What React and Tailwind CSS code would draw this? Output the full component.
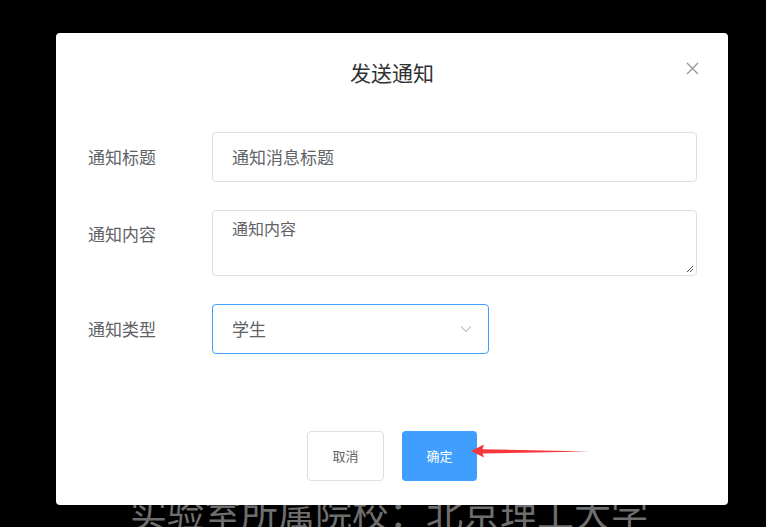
import React from 'react';

const font = { fontFamily: '"Noto Sans CJK SC", "Noto Sans", sans-serif' };

function Row({ label, children, top = false }) {
  return (
    <div className={`flex ${top ? 'items-start' : 'items-center'}`}>
      <div className={`w-[124px] shrink-0 text-[17px] text-[#606266] ${top ? 'pt-[11px]' : ''}`}>{label}</div>
      {children}
    </div>
  );
}

export default function App() {
  return (
    <div className="relative w-[766px] h-[527px] bg-black overflow-hidden" style={font}>
      <div className="absolute left-[130px] top-[494px] text-[37px] leading-none text-[#6e6e6e] whitespace-nowrap">
        实验室所属院校：北京理工大学
      </div>

      <div className="absolute left-[56px] top-[33px] w-[672px] h-[472px] bg-white rounded-[4px] flex flex-col">
        <div className="relative h-[80px] flex items-center justify-center">
          <span className="text-[21px] text-[#303133]">发送通知</span>
          <svg className="absolute right-[29px] top-[29px]" width="13" height="13" viewBox="0 0 13 13">
            <path d="M1 1L12 12M12 1L1 12" stroke="#909399" strokeWidth="1.2" fill="none" />
          </svg>
        </div>

        <div className="flex flex-col gap-[28px] pl-[32px] pr-[31px] pt-[19px]">
          <Row label="通知标题">
            <div className="flex-1 h-[50px] border border-[#dcdfe6] rounded-[4px] flex items-center px-[19px] text-[17px] text-[#606266]">
              通知消息标题
            </div>
          </Row>
          <Row label="通知内容" top>
            <div className="relative flex-1 h-[66px] border border-[#dcdfe6] rounded-[4px] px-[19px] pt-[5px] text-[16px] text-[#606266]">
              通知内容
              <svg className="absolute right-[2px] bottom-[2px]" width="8" height="8" viewBox="0 0 8 8">
                <path d="M7 1L1 7M7 4L4 7" stroke="#555" strokeWidth="1" fill="none" />
              </svg>
            </div>
          </Row>
          <Row label="通知类型">
            <div className="w-[277px] h-[50px] border border-[#409eff] rounded-[4px] flex items-center justify-between pl-[19px] pr-[16px] text-[17px] text-[#606266]">
              <span>学生</span>
              <svg width="12" height="8" viewBox="0 0 12 8">
                <path d="M1 1.5L6 6.5L11 1.5" stroke="#c0c4cc" strokeWidth="1.2" fill="none" />
              </svg>
            </div>
          </Row>
        </div>

        <div className="mt-auto mb-[24px] flex justify-center gap-[18px]">
          <button className="w-[77px] h-[50px] border border-[#dcdfe6] rounded-[4px] bg-white text-[13px] text-[#606266]">
            取消
          </button>
          <div className="relative">
            <button className="w-[75px] h-[50px] rounded-[4px] bg-[#409eff] text-[13px] text-white">
              确定
            </button>
            <svg className="absolute left-[67px] top-[12px]" width="122" height="16" viewBox="0 0 122 16">
              <path d="M2 8L15 1.5L13.5 6.2L120 8.4L13.5 10.4L15 14.5Z" fill="#f5363a" />
            </svg>
          </div>
        </div>
      </div>
    </div>
  );
}
